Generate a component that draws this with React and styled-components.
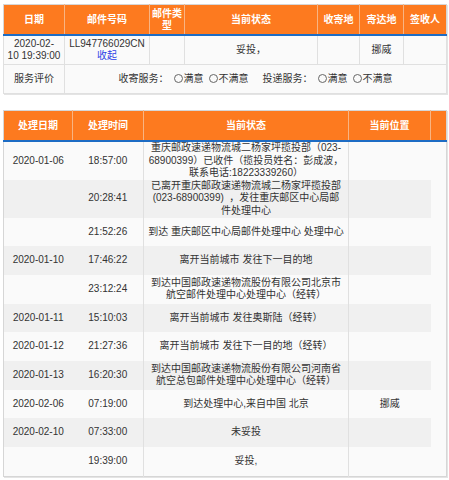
import React from 'react';
import styled, { createGlobalStyle } from 'styled-components';

const GlobalStyle = createGlobalStyle`
  body {
    margin: 0;
    background: #fff;
    font-family: "Liberation Sans", "Noto Sans CJK SC", sans-serif;
    font-size: 10px;
    color: #333;
  }
`;

const Page = styled.div`
  padding: 4px 3px;
  width: 443px;
`;

const Table = styled.table`
  width: 443px;
  table-layout: fixed;
  border-collapse: collapse;
  background: #fafafa;
  border: 1px solid #d6d6d6;
  box-shadow: 1px 1px 0 #e4e4e4;
  margin-bottom: ${(p) => p.gap || 0}px;
`;

const Th = styled.th`
  background: #fd7a1f;
  color: #fff;
  font-weight: bold;
  height: 29px;
  padding: 0 2px;
  line-height: 12px;
  text-align: center;
  border-bottom: 2px solid #1d6cc4;
  border-left: 1px solid #f8b483;
  &:first-child {
    border-left: none;
  }
`;

const InfoTd = styled.td`
  height: 28px;
  padding: 0 2px;
  line-height: 12.5px;
  text-align: center;
  border: 1px solid #e0e0e0;
  border-top: ${(p) => (p.first ? 'none' : '1px solid #e0e0e0')};
`;

const Link = styled.a`
  display: block;
  color: #2b3fe6;
  text-decoration: none;
  cursor: pointer;
`;

const Rating = styled.span`
  margin-right: ${(p) => p.gap || 0}px;
`;

const Radio = styled.span`
  display: inline-block;
  width: 7px;
  height: 7px;
  border: 1px solid #666;
  border-radius: 50%;
  margin: 0 1px 0 5px;
  vertical-align: -1px;
`;

const Row = styled.tr`
  td {
    background: ${(p) => (p.striped ? '#f0f0f0' : '#fafafa')};
  }
`;

const Td = styled.td`
  height: 28.7px;
  padding: 0 4px;
  line-height: 12.6px;
  text-align: center;
  border-left: ${(p) => (p.divided ? '1px solid #e0e0e0' : 'none')};
  border-right: ${(p) => (p.divided ? '1px solid #e0e0e0' : 'none')};
`;

const tracks = [
  ['2020-01-06', '18:57:00', '重庆邮政速递物流城二杨家坪揽投部（023-68900399）已收件（揽投员姓名：彭成波，联系电话:18223339260）', ''],
  ['', '20:28:41', '已离开重庆邮政速递物流城二杨家坪揽投部(023-68900399)\u00a0\u00a0，发往重庆邮区中心局邮件处理中心', ''],
  ['', '21:52:26', '到达 重庆邮区中心局邮件处理中心 处理中心', ''],
  ['2020-01-10', '17:46:22', '离开当前城市 发往下一目的地', ''],
  ['', '23:12:24', '到达中国邮政速递物流股份有限公司北京市航空邮件处理中心处理中心（经转）', ''],
  ['2020-01-11', '15:10:03', '离开当前城市 发往奥斯陆（经转）', ''],
  ['2020-01-12', '21:27:36', '离开当前城市 发往下一目的地（经转）', ''],
  ['2020-01-13', '16:20:30', '到达中国邮政速递物流股份有限公司河南省航空总包邮件处理中心处理中心（经转）', ''],
  ['2020-02-06', '07:19:00', '到达处理中心,来自中国 北京', '挪威'],
  ['2020-02-10', '07:33:00', '未妥投', ''],
  ['', '19:39:00', '妥投,', ''],
];

const RadioPair = () => (
  <>
    <Radio />满意
    <Radio />不满意
  </>
);

export default function App() {
  return (
    <Page>
      <GlobalStyle />
      <Table gap={16}>
        <colgroup>
          <col style={{ width: 61 }} />
          <col style={{ width: 85 }} />
          <col style={{ width: 35 }} />
          <col style={{ width: 133 }} />
          <col style={{ width: 42 }} />
          <col style={{ width: 44 }} />
          <col style={{ width: 43 }} />
        </colgroup>
        <thead>
          <tr>
            <Th>日期</Th>
            <Th>邮件号码</Th>
            <Th>邮件类型</Th>
            <Th>当前状态</Th>
            <Th>收寄地</Th>
            <Th>寄达地</Th>
            <Th>签收人</Th>
          </tr>
        </thead>
        <tbody>
          <tr>
            <InfoTd first>
              2020-02-
              <br />
              10 19:39:00
            </InfoTd>
            <InfoTd first>
              LL947766029CN
              <Link>收起</Link>
            </InfoTd>
            <InfoTd first />
            <InfoTd first>妥投，</InfoTd>
            <InfoTd first />
            <InfoTd first>挪威</InfoTd>
            <InfoTd first />
          </tr>
          <tr>
            <InfoTd>服务评价</InfoTd>
            <InfoTd colSpan={6}>
              <Rating gap={14}>
                收寄服务：<RadioPair />
              </Rating>
              <Rating>
                投递服务：<RadioPair />
              </Rating>
            </InfoTd>
          </tr>
        </tbody>
      </Table>

      <Table>
        <colgroup>
          <col style={{ width: 69 }} />
          <col style={{ width: 71 }} />
          <col style={{ width: 205 }} />
          <col style={{ width: 82 }} />
          <col style={{ width: 16 }} />
        </colgroup>
        <thead>
          <tr>
            <Th>处理日期</Th>
            <Th>处理时间</Th>
            <Th>当前状态</Th>
            <Th>当前位置</Th>
            <Th />
          </tr>
        </thead>
        <tbody>
          {tracks.map(([date, time, status, place], i) => (
            <Row key={i} striped={i % 2 === 1}>
              <Td>{date}</Td>
              <Td>{time}</Td>
              <Td divided>{status}</Td>
              <Td>{place}</Td>
            </Row>
          ))}
        </tbody>
      </Table>
    </Page>
  );
}
